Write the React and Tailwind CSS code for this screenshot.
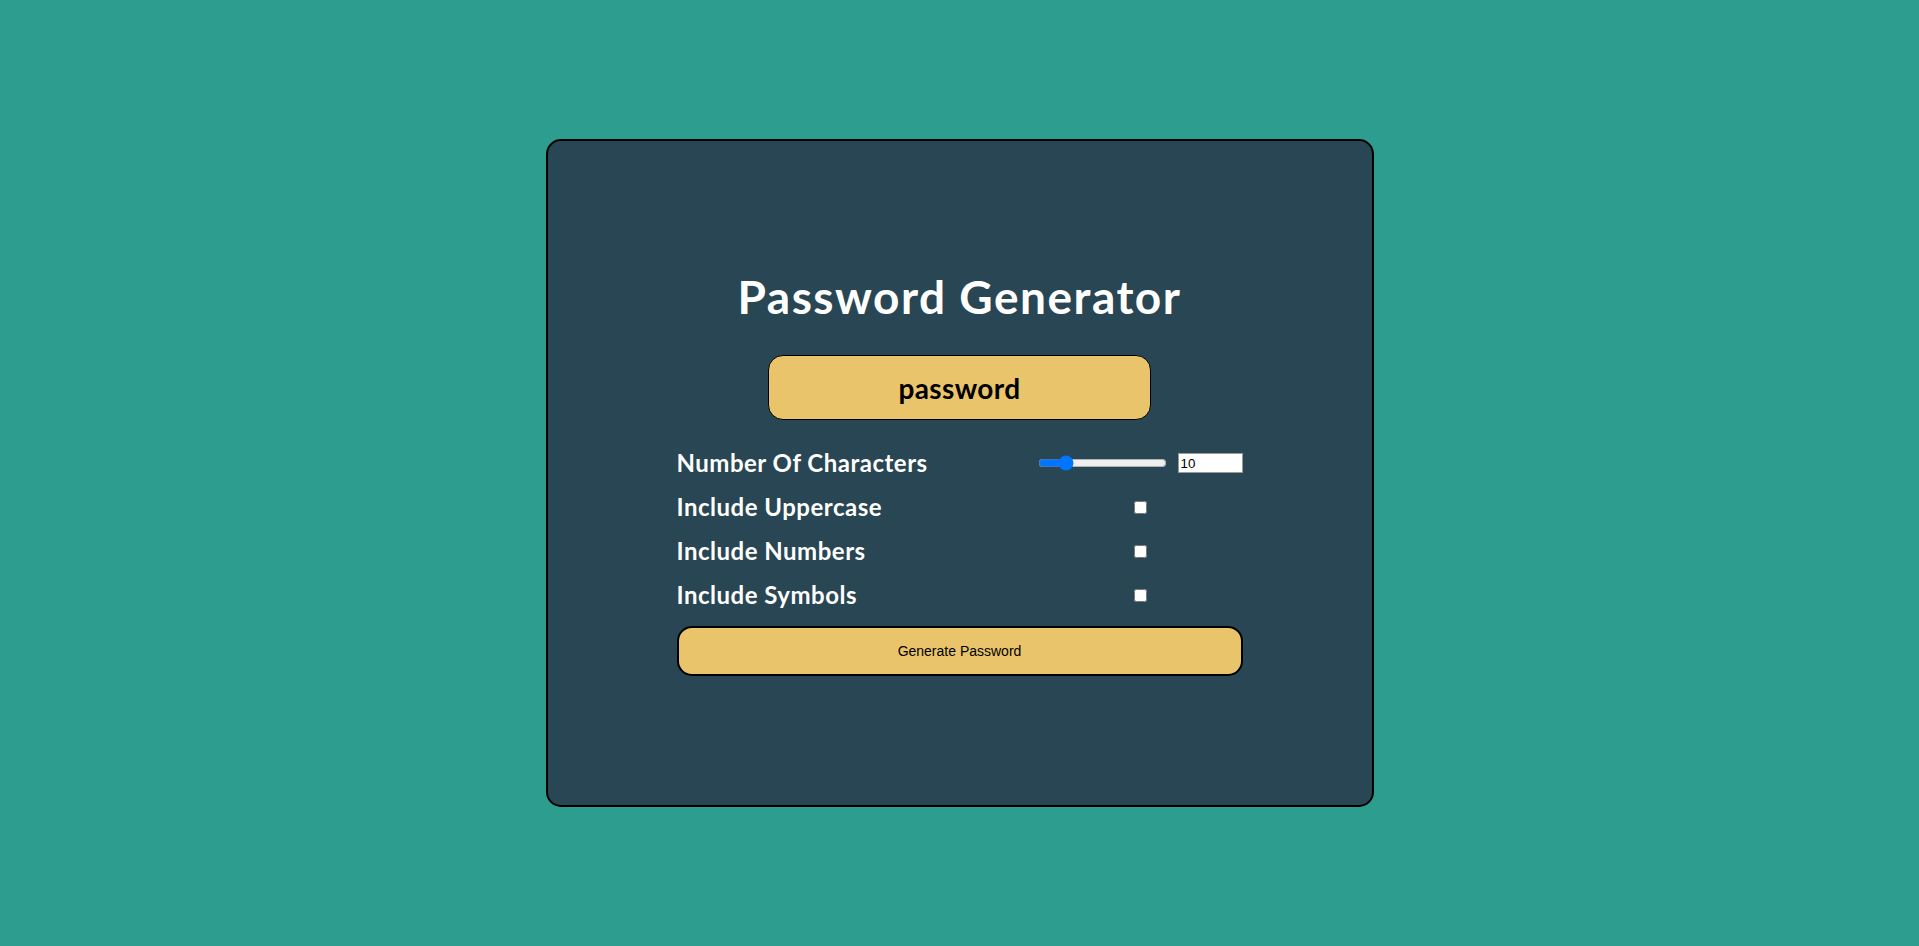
import React, { useState } from 'react';

const Row = ({ label, children }) => (
  <div className="flex h-[44px] items-center justify-between">
    <span className="text-[24px] font-bold text-white leading-none tracking-[0.5px]">{label}</span>
    <div className="w-[205px] flex items-center">{children}</div>
  </div>
);

const App = () => {
  const [length, setLength] = useState(10);
  const [upper, setUpper] = useState(false);
  const [numbers, setNumbers] = useState(false);
  const [symbols, setSymbols] = useState(false);
  const [password, setPassword] = useState('password');

  const generate = () => {
    let chars = 'abcdefghijklmnopqrstuvwxyz';
    if (upper) chars += 'ABCDEFGHIJKLMNOPQRSTUVWXYZ';
    if (numbers) chars += '0123456789';
    if (symbols) chars += '!@#$%^&*()_+-=[]{}';
    let out = '';
    for (let i = 0; i < length; i++) {
      out += chars[Math.floor(Math.random() * chars.length)];
    }
    setPassword(out);
  };

  return (
    <div className="min-h-screen bg-[#2d9d8f] flex items-center justify-center font-['Lato',sans-serif]">
      <div className="w-[828px] h-[668px] bg-[#284653] border-2 border-black rounded-[15px] flex flex-col items-center justify-center pt-[4px]">
        <h1 className="text-[46px] leading-[46px] font-bold text-white tracking-[1.5px]">Password Generator</h1>

        {/* Password display */}
        <div className="mt-[35px] w-[383px] h-[65px] bg-[#e9c46a] border border-black rounded-[15px] flex items-center justify-center">
          <span className="text-[28px] font-bold text-black leading-none tracking-[0.4px]">{password}</span>
        </div>

        {/* Options */}
        <div className="mt-[21px] w-[566px]">
          <Row label="Number Of Characters">
            <input
              type="range"
              min="1"
              max="50"
              value={length}
              onChange={(e) => setLength(Number(e.target.value))}
              className="w-[129px]"
            />
            <input
              type="number"
              value={length}
              onChange={(e) => setLength(Number(e.target.value))}
              className="ml-[11px] w-[65px] h-[20px] bg-white border border-[#999] px-[2px] text-[13.33px] text-black font-['Liberation_Sans',Arial,sans-serif]"
            />
          </Row>
          <Row label="Include Uppercase">
            <div className="w-full flex justify-center">
              <input type="checkbox" checked={upper} onChange={() => setUpper(!upper)} />
            </div>
          </Row>
          <Row label="Include Numbers">
            <div className="w-full flex justify-center">
              <input type="checkbox" checked={numbers} onChange={() => setNumbers(!numbers)} />
            </div>
          </Row>
          <Row label="Include Symbols">
            <div className="w-full flex justify-center">
              <input type="checkbox" checked={symbols} onChange={() => setSymbols(!symbols)} />
            </div>
          </Row>

          <button
            onClick={generate}
            className="mt-[9px] w-full h-[50px] bg-[#e9c46a] border-2 border-black rounded-[15px] text-[14px] text-black font-['Liberation_Sans',Arial,sans-serif]"
          >
            Generate Password
          </button>
        </div>
      </div>
    </div>
  );
};

export default App;
